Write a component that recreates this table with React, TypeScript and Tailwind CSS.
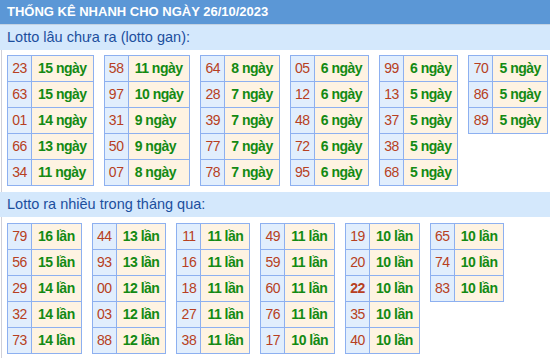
import React from "react";

type Row = [string, number, boolean?];

const gan: Row[][] = [
  [["23", 15], ["63", 15], ["01", 14], ["66", 13], ["34", 11]],
  [["58", 11], ["97", 10], ["31", 9], ["50", 9], ["07", 8]],
  [["64", 8], ["28", 7], ["39", 7], ["77", 7], ["78", 7]],
  [["05", 6], ["12", 6], ["48", 6], ["72", 6], ["95", 6]],
  [["99", 6], ["13", 5], ["37", 5], ["38", 5], ["68", 5]],
  [["70", 5], ["86", 5], ["89", 5]],
];

const nhieu: Row[][] = [
  [["79", 16], ["56", 15], ["29", 14], ["32", 14], ["73", 14]],
  [["44", 13], ["93", 13], ["00", 12], ["03", 12], ["88", 12]],
  [["11", 11], ["16", 11], ["18", 11], ["27", 11], ["38", 11]],
  [["49", 11], ["59", 11], ["60", 11], ["76", 11], ["17", 10]],
  [["19", 10], ["20", 10], ["22", 10, true], ["35", 10], ["40", 10]],
  [["65", 10], ["74", 10], ["83", 10]],
];

function NumTable({ rows, unit }: { rows: Row[]; unit: string }) {
  return (
    <table className="border-collapse border border-[#8db0f0]">
      <tbody>
        {rows.map(([n, v, b]) => (
          <tr key={n} className="h-[26px]">
            <td
              className={`border border-[#8db0f0] bg-[#e1eefd] w-[24px] p-0 text-center text-[14px] tracking-[-0.5px] text-[#b73f22] ${
                b ? "font-bold" : ""
              }`}
            >
              {n}
            </td>
            <td className="border border-[#8db0f0] bg-[#fef3e2] px-[6px] py-0 text-[14px] tracking-[-0.5px] font-bold text-[#138a13] whitespace-nowrap">
              {v} {unit}
            </td>
          </tr>
        ))}
      </tbody>
    </table>
  );
}

function Section({ title, tables, unit, pt }: { title: string; tables: Row[][]; unit: string; pt: string }) {
  return (
    <div>
      <div className="h-[25px] bg-[#d4e8fc] pl-[7px] flex items-center text-[14.5px] text-[#1c4f9e]">
        {title}
      </div>
      <div className={`ml-px border-l border-[#d0d0d8] pl-[5px] ${pt} flex items-start gap-[10px]`}>
        {tables.map((t, i) => (
          <NumTable key={i} rows={t} unit={unit} />
        ))}
      </div>
    </div>
  );
}

export default function App() {
  return (
    <div className="w-[550px] h-[358px] bg-white overflow-hidden" style={{ fontFamily: '"Liberation Sans", Arial, sans-serif' }}>
      <div className="h-[25px] bg-[#5b97d6] border-b border-[#c3d2e2] pl-[7px] flex items-center text-[13px] font-bold text-white">
        THỐNG KÊ NHANH CHO NGÀY 26/10/2023
      </div>
      <Section title="Lotto lâu chưa ra (lotto gan):" tables={gan} unit="ngày" pt="pt-[5px] pb-[6px]" />
      <Section title="Lotto ra nhiều trong tháng qua:" tables={nhieu} unit="lần" pt="pt-[6px] pb-[6px]" />
    </div>
  );
}
